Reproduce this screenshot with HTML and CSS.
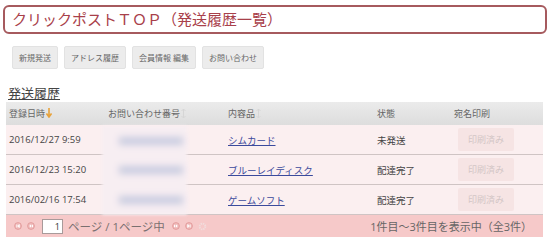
FILE: index.html
```html
<!DOCTYPE html>
<html lang="ja">
<head>
  <meta charset="UTF-8">
  <title>クリックポストＴＯＰ（発送履歴一覧）</title>
  <link rel="stylesheet" href="styles.css">
</head>
<body>

  <h1 class="title">クリックポストＴＯＰ（発送履歴一覧）</h1>

  <div class="menu">
    <a class="btn">新規発送</a>
    <a class="btn">アドレス履歴</a>
    <a class="btn">会員情報 編集</a>
    <a class="btn">お問い合わせ</a>
  </div>

  <h2 class="section">発送履歴</h2>

  <div class="grid">
    <table>
      <colgroup>
        <col class="c-date"><col class="c-no"><col class="c-item"><col class="c-state"><col class="c-print">
      </colgroup>
      <thead>
        <tr>
          <th>登録日時<svg class="sort on" width="6" height="10" viewBox="0 0 6 10"><path d="M3 0v8M0.5 5.5L3 9l2.5-3.5" fill="none" stroke="#e8a33c" stroke-width="1.6"/></svg></th>
          <th>お問い合わせ番号<svg class="sort" width="5" height="9" viewBox="0 0 5 9"><path d="M2.5 0v9M0.5 2L2.5 0 4.5 2M0.5 7l2 2 2-2" fill="none" stroke="#d6d6d6" stroke-width="1"/></svg></th>
          <th>内容品<svg class="sort" width="5" height="9" viewBox="0 0 5 9"><path d="M2.5 0v9M0.5 2L2.5 0 4.5 2M0.5 7l2 2 2-2" fill="none" stroke="#d6d6d6" stroke-width="1"/></svg></th>
          <th>状態</th>
          <th>宛名印刷</th>
        </tr>
      </thead>
      <tbody>
        <tr>
          <td>2016/12/27 9:59</td>
          <td></td>
          <td><a class="link">シムカード</a></td>
          <td>未発送</td>
          <td><span class="printed">印刷済み</span></td>
        </tr>
        <tr>
          <td>2016/12/23 15:20</td>
          <td></td>
          <td><a class="link">ブルーレイディスク</a></td>
          <td>配達完了</td>
          <td><span class="printed">印刷済み</span></td>
        </tr>
        <tr>
          <td>2016/02/16 17:54</td>
          <td></td>
          <td><a class="link">ゲームソフト</a></td>
          <td>配達完了</td>
          <td><span class="printed">印刷済み</span></td>
        </tr>
      </tbody>
    </table>

    <!-- お問い合わせ番号はぼかし -->
    <div class="mask">
      <span class="bar"></span>
      <span class="bar"></span>
      <span class="bar"></span>
    </div>

    <div class="pager">
      <div class="pager-left">
        <svg class="pico" width="8" height="8" viewBox="0 0 8 8"><circle cx="4" cy="4" r="3.4" fill="#f0bcbc" stroke="#e09494" stroke-width="0.8"/><path d="M2.6 2.5v3M5.4 2.5L3.4 4l2 1.5z" fill="#fff" stroke="#fff" stroke-width="0.6"/></svg>
        <svg class="pico" width="8" height="8" viewBox="0 0 8 8"><circle cx="4" cy="4" r="3.4" fill="#f0bcbc" stroke="#e09494" stroke-width="0.8"/><path d="M4 2.5L2.2 4 4 5.5zM6 2.5L4.2 4 6 5.5z" fill="#fff"/></svg>
        <span class="pagebox">1</span>
        <span class="pagetext">ページ / 1ページ中</span>
        <svg class="pico" width="8" height="8" viewBox="0 0 8 8"><circle cx="4" cy="4" r="3.4" fill="#f0bcbc" stroke="#e09494" stroke-width="0.8"/><path d="M2 2.5L3.8 4 2 5.5zM4 2.5L5.8 4 4 5.5z" fill="#fff"/></svg>
        <svg class="pico" width="8" height="8" viewBox="0 0 8 8"><circle cx="4" cy="4" r="3.4" fill="#f0bcbc" stroke="#e09494" stroke-width="0.8"/><path d="M5.4 2.5v3M2.6 2.5L4.6 4l-2 1.5z" fill="#fff" stroke="#fff" stroke-width="0.6"/></svg>
        <svg class="pico" width="9" height="9" viewBox="0 0 9 9"><circle cx="4.5" cy="4.5" r="2.8" fill="none" stroke="#f1dcdc" stroke-width="1.8" stroke-dasharray="1.4 0.8"/><circle cx="4.5" cy="4.5" r="1.1" fill="#f6c9c9"/></svg>
      </div>
      <div class="pager-right">1件目～3件目を表示中（全3件）</div>
    </div>
  </div>

</body>
</html>
```

FILE: styles.css
```css
body {
  margin: 0;
  font-family: "Open Sans", "Noto Sans CJK JP", sans-serif;
  color: #444;
  background: #fff;
}
.title {
  margin: 5px 3px 0;
  height: 25px;
  padding-left: 7px;
  border: 2px solid #a65a5e;
  border-radius: 6px;
  font-size: 15px;
  font-weight: normal;
  line-height: 25px;
  color: #a8404a;
}
.menu {
  display: flex;
  gap: 6px;
  margin: 12px 0 0 12px;
}
.btn {
  height: 21px;
  padding: 0 6px;
  line-height: 21px;
  font-size: 8px;
  color: #666;
  background: #ececec;
  border: 1px solid #e2e2e2;
  border-radius: 2px;
}
.section {
  margin: 16px 0 1px 8px;
  font-size: 13px;
  font-weight: normal;
  line-height: 16px;
  color: #444;
  text-decoration: underline;
}
.grid {
  position: relative;
  width: 537px;
  margin-left: 6px;
}
table {
  width: 537px;
  border-collapse: collapse;
  table-layout: fixed;
}
.c-date { width: 99px; }
.c-no { width: 120px; }
.c-item { width: 149px; }
.c-state { width: 77px; }
.c-print { width: 92px; }
th {
  height: 23px;
  padding: 0 0 0 3px;
  text-align: left;
  font-size: 9px;
  font-weight: normal;
  color: #666;
  background: linear-gradient(#ebebeb, #dddddd);
}
.sort { margin-left: 1px; vertical-align: -1px; }
td {
  height: 29px;
  padding: 0 0 0 3px;
  font-size: 9.5px;
  color: #444;
  background: #fbeff0;
  border-bottom: 1px solid #cfc4c4;
}
.link {
  color: #3b4a9c;
  text-decoration: underline;
}
.printed {
  display: inline-block;
  width: 56px;
  height: 23px;
  margin-left: 4px;
  line-height: 23px;
  text-align: center;
  font-size: 9px;
  color: #d3c6c6;
  background: #f6e4e4;
  border-radius: 2px;
}
.mask {
  position: absolute;
  left: 96px;
  top: 24px;
  width: 85px;
  height: 89px;
  display: flex;
  flex-direction: column;
  justify-content: space-around;
  align-items: center;
  background: #f7eef2;
  filter: blur(1.5px);
}
.bar {
  width: 64px;
  height: 8px;
  margin-left: 12px;
  background: #c9cce0;
  filter: blur(3px);
}
.pager {
  display: flex;
  justify-content: space-between;
  align-items: center;
  height: 22px;
  padding: 0 11px 0 8px;
  background: #f6c9c9;
}
.pager-left {
  display: flex;
  align-items: center;
  gap: 5px;
}
.pagebox {
  width: 21px;
  height: 15px;
  margin-left: 2px;
  padding-right: 2px;
  box-sizing: border-box;
  text-align: right;
  font-size: 9px;
  line-height: 14px;
  color: #333;
  background: #fff;
  border: 1px solid #a89a9a;
}
.pagetext {
  margin-right: 2px;
  font-size: 11.5px;
  color: #7a7070;
}
.pager-right {
  font-size: 11px;
  color: #666;
}
```
